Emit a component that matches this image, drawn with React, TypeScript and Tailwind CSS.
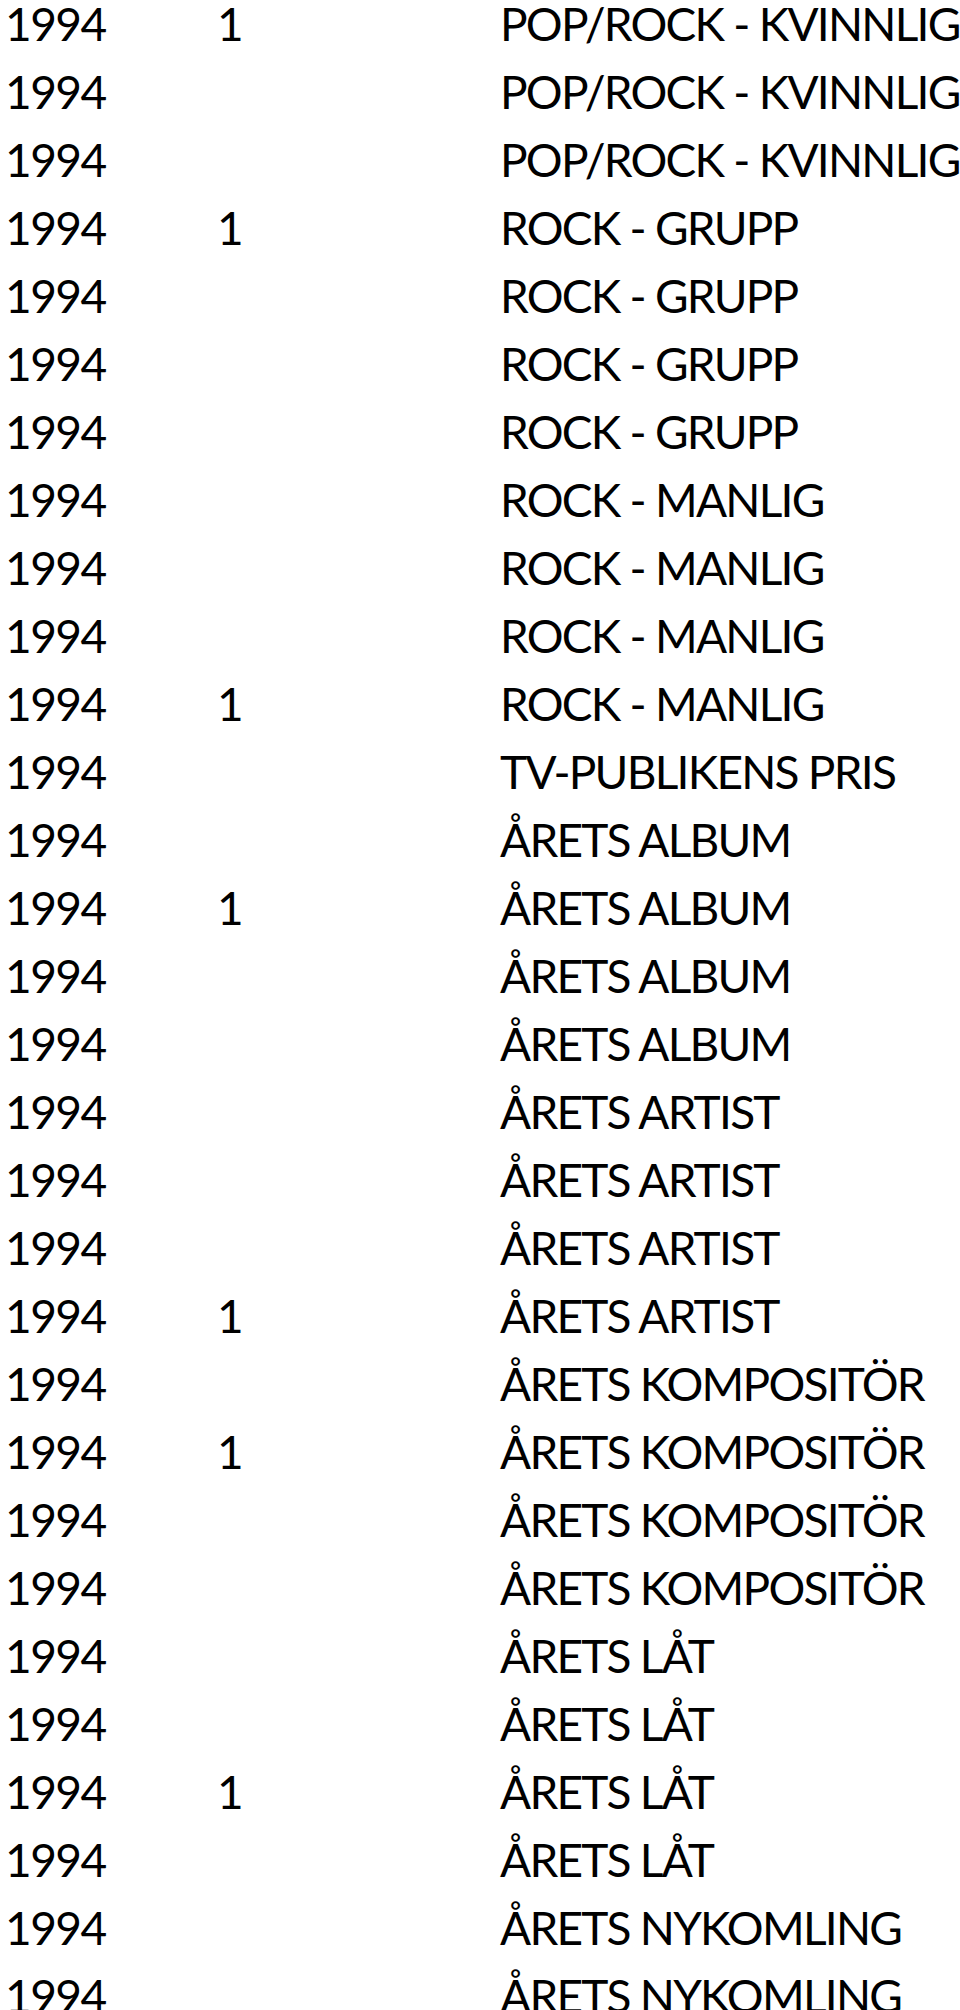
const rows: [string, string][] = [
  ["1", "POP/ROCK - KVINNLIG"],
  ["", "POP/ROCK - KVINNLIG"],
  ["", "POP/ROCK - KVINNLIG"],
  ["1", "ROCK - GRUPP"],
  ["", "ROCK - GRUPP"],
  ["", "ROCK - GRUPP"],
  ["", "ROCK - GRUPP"],
  ["", "ROCK - MANLIG"],
  ["", "ROCK - MANLIG"],
  ["", "ROCK - MANLIG"],
  ["1", "ROCK - MANLIG"],
  ["", "TV-PUBLIKENS PRIS"],
  ["", "ÅRETS ALBUM"],
  ["1", "ÅRETS ALBUM"],
  ["", "ÅRETS ALBUM"],
  ["", "ÅRETS ALBUM"],
  ["", "ÅRETS ARTIST"],
  ["", "ÅRETS ARTIST"],
  ["", "ÅRETS ARTIST"],
  ["1", "ÅRETS ARTIST"],
  ["", "ÅRETS KOMPOSITÖR"],
  ["1", "ÅRETS KOMPOSITÖR"],
  ["", "ÅRETS KOMPOSITÖR"],
  ["", "ÅRETS KOMPOSITÖR"],
  ["", "ÅRETS LÅT"],
  ["", "ÅRETS LÅT"],
  ["1", "ÅRETS LÅT"],
  ["", "ÅRETS LÅT"],
  ["", "ÅRETS NYKOMLING"],
  ["", "ÅRETS NYKOMLING"],
];

export default function App() {
  return (
    <div className="w-[960px] h-[2010px] overflow-hidden bg-white text-black font-['Lato',sans-serif] text-[46px] leading-[47px] tracking-[-1.5px]">
      {rows.map(([n, cat], i) => (
        <div key={i} className="grid grid-cols-[212px_283px_1fr] h-[68px] pl-[5px]">
          <span>1994</span>
          <span>{n}</span>
          <span className="whitespace-nowrap tracking-[-1.75px]">{cat}</span>
        </div>
      ))}
    </div>
  );
}
